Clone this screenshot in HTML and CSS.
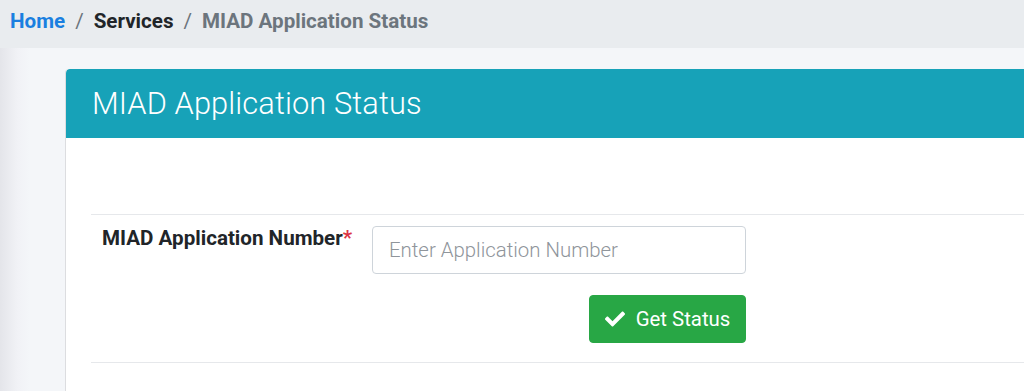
FILE: index.html
```html
<!DOCTYPE html>
<html lang="en">
<head>
<meta charset="utf-8">
<title>MIAD Application Status</title>
<link rel="stylesheet" href="styles.css">
</head>
<body>
<nav class="breadcrumb">
  <a class="crumb-home" href="#">Home</a>
  <span class="sep">/</span>
  <span class="crumb-mid">Services</span>
  <span class="sep">/</span>
  <span class="crumb-active">MIAD Application Status</span>
</nav>
<main class="content">
  <section class="card">
    <header class="card-header">
      <h1 class="card-title">MIAD Application Status</h1>
    </header>
    <div class="card-body">
      <hr class="rule">
      <form class="form">
        <div class="form-row">
          <label class="label" for="appno">MIAD Application Number<span class="req">*</span></label>
          <div class="field">
            <input id="appno" class="input" type="text" placeholder="Enter Application Number">
            <div class="actions">
              <button type="button" class="btn">
                <svg class="check" viewBox="0 0 512 512" aria-hidden="true"><path fill="currentColor" d="M173.9 439.4l-166.4-166.4c-10-10-10-26.2 0-36.2l36.2-36.2c10-10 26.2-10 36.2 0L192 312.7 432.1 72.6c10-10 26.2-10 36.2 0l36.2 36.2c10 10 10 26.2 0 36.2l-294.4 294.4c-10 10-26.2 10-36.2 0z"/></svg>
                <span>Get Status</span>
              </button>
            </div>
          </div>
        </div>
      </form>
      <hr class="rule rule-bottom">
    </div>
  </section>
</main>
</body>
</html>
```

FILE: styles.css
```css
html, body {
  margin: 0;
  padding: 0;
}
body {
  background: #f4f6f9;
  font-family: Roboto, "Liberation Sans", sans-serif;
  color: #212529;
  height: 391px;
  overflow: hidden;
  background-image: linear-gradient(to right, #e4e5ea 0px, #f1f2f6 18px, #f4f6f9 30px);
}
.breadcrumb {
  height: 48px;
  background: #e9ecef;
  display: flex;
  align-items: center;
  padding-left: 10px;
  font-size: 20.6px;
  font-weight: 700;
  box-sizing: border-box;
  padding-bottom: 6px;
}
.crumb-home {
  color: #1a7fe0;
  text-decoration: none;
}
.sep {
  color: #6c757d;
  font-weight: 400;
  padding: 0 10px;
}
.crumb-mid {
  color: #212529;
}
.crumb-active {
  color: #6c757d;
}
.content {
  padding: 21px 0 0 65px;
}
.card {
  background: #fff;
  border-left: 1px solid #dcdde0;
  border-top-left-radius: 4px;
  height: 322px;
  overflow: hidden;
}
.card-header {
  background: #17a2b8;
  height: 69px;
  display: flex;
  align-items: center;
  padding-left: 26px;
  border-top-left-radius: 4px;
}
.card-title {
  margin: 0;
  color: #fff;
  font-size: 30.8px;
  font-weight: 300;
  letter-spacing: 0.1px;
}
.card-body {
  padding: 76px 0 0 25px;
}
.rule {
  border: 0;
  border-top: 1px solid #e6e8eb;
  margin: 0;
}
.form-row {
  display: flex;
  padding: 11px 0 19px 12px;
}
.label {
  width: 270px;
  font-weight: 700;
  font-size: 20.6px;
  line-height: 1.2;
  padding-top: 0;
  margin-left: -1px;
  color: #212529;
}
.req {
  color: #dc3545;
}
.field {
  width: 374px;
  display: flex;
  flex-direction: column;
}
.input {
  height: 48px;
  box-sizing: border-box;
  border: 1px solid #ced4da;
  border-radius: 4px;
  padding: 0 16px;
  font-family: Roboto, "Liberation Sans", sans-serif;
  font-size: 20.4px;
  font-weight: 300;
  color: #495057;
}
.input::placeholder {
  color: #8f959b;
}
.actions {
  display: flex;
  justify-content: flex-end;
  margin-top: 21px;
}
.btn {
  height: 48px;
  width: 157px;
  background: #28a745;
  border: 1px solid #28a745;
  border-radius: 4px;
  color: #fff;
  font-family: Roboto, "Liberation Sans", sans-serif;
  font-size: 20.4px;
  display: flex;
  align-items: center;
  justify-content: center;
  gap: 11px;
  padding: 0;
}
.check {
  width: 20px;
  height: 20px;
}
```
